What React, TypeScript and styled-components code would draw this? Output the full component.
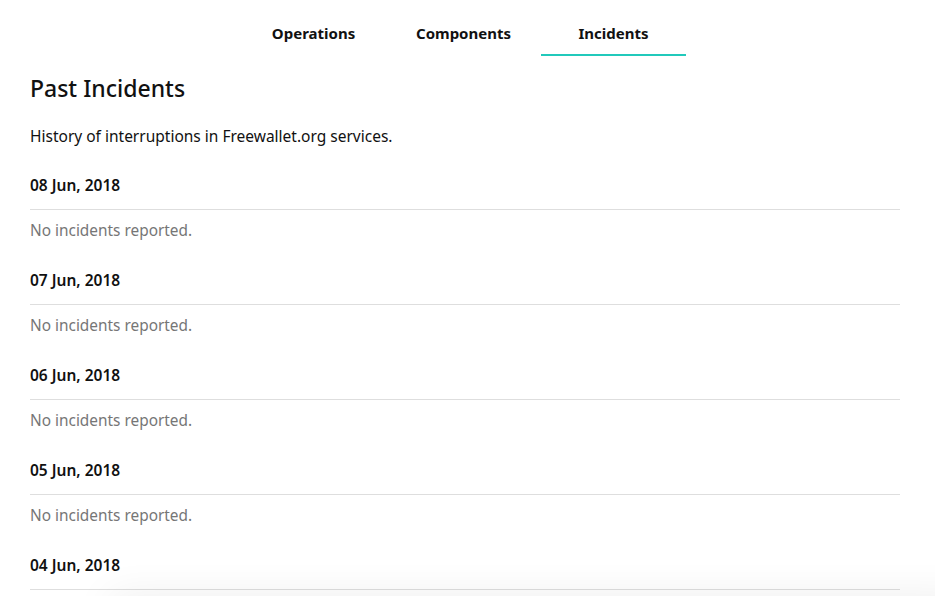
import React from 'react';
import styled, {createGlobalStyle} from 'styled-components';

const GlobalStyle = createGlobalStyle`
  html, body {
    margin: 0;
    padding: 0;
    background: #fff;
    font-family: "Noto Sans", "Open Sans", "Liberation Sans", sans-serif;
    color: #111;
    overflow: hidden;
  }
`;

const Page = styled.div`
  padding: 0 35px 0 30px;
`;

const Tabs = styled.nav`
  display: flex;
  justify-content: center;
  gap: 5px;
  margin-right: 3px;
`;

const Tab = styled.div<{ $active?: boolean }>`
  width: 145px;
  height: 56px;
  box-sizing: border-box;
  padding-top: 23px;
  text-align: center;
  font-size: 15px;
  line-height: 20px;
  font-weight: 700;
  color: #111;
  border-bottom: 2px solid ${p => (p.$active ? '#21c9bb' : 'transparent')};
`;

const Title = styled.h1`
  margin: 16px 0 0;
  font-size: 23px;
  line-height: 32px;
  font-weight: 500;
`;

const Intro = styled.p`
  margin: 20px 0 0;
  font-size: 15.5px;
  line-height: 24px;
`;

const Day = styled.section`
  margin-top: 26px;

  & + & {
    margin-top: 27px;
  }
`;

const DayHeader = styled.h3`
  margin: 0;
  padding-bottom: 13px;
  border-bottom: 1px solid #dedede;
  font-size: 15.5px;
  line-height: 22px;
  font-weight: 600;
`;

const Note = styled.p`
  margin: 10px 0 0;
  font-size: 15.4px;
  line-height: 22px;
  color: #767676;
`;

const FooterShadow = styled.div`
  position: fixed;
  left: 110px;
  right: -30px;
  bottom: -40px;
  height: 40px;
  background: #fff;
  box-shadow: 0 0 40px rgba(0, 0, 0, 0.07);
`;

const days = ['08 Jun, 2018', '07 Jun, 2018', '06 Jun, 2018', '05 Jun, 2018', '04 Jun, 2018'];

export default function App() {
    return (
        <Page>
            <GlobalStyle/>
            <Tabs>
                <Tab>Operations</Tab>
                <Tab>Components</Tab>
                <Tab $active>Incidents</Tab>
            </Tabs>

            <Title>Past Incidents</Title>
            <Intro>History of interruptions in Freewallet.org services.</Intro>

            {days.map(d => (
                <Day key={d}>
                    <DayHeader>{d}</DayHeader>
                    <Note>No incidents reported.</Note>
                </Day>
            ))}

            <FooterShadow/>
        </Page>
    );
}
